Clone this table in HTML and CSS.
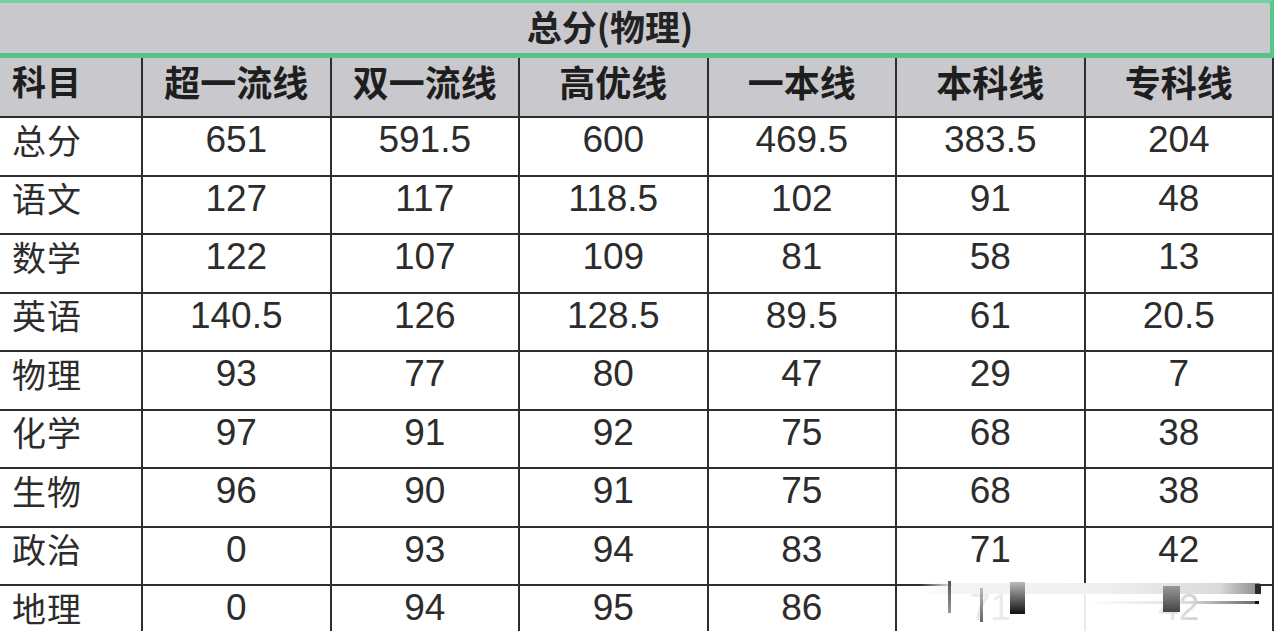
FILE: index.html
```html
<!DOCTYPE html>
<html lang="zh-CN">
<head>
<meta charset="utf-8">
<title>总分(物理)</title>
<link rel="stylesheet" href="styles.css">
</head>
<body>
<div class="sheet">
  <div class="title">总分(物理)</div>

  <div class="cell head subj">科目</div>
  <div class="cell head">超一流线</div>
  <div class="cell head">双一流线</div>
  <div class="cell head">高优线</div>
  <div class="cell head">一本线</div>
  <div class="cell head">本科线</div>
  <div class="cell head">专科线</div>

  <div class="cell subj">总分</div><div class="cell">651</div><div class="cell">591.5</div><div class="cell">600</div><div class="cell">469.5</div><div class="cell">383.5</div><div class="cell">204</div>
  <div class="cell subj">语文</div><div class="cell">127</div><div class="cell">117</div><div class="cell">118.5</div><div class="cell">102</div><div class="cell">91</div><div class="cell">48</div>
  <div class="cell subj">数学</div><div class="cell">122</div><div class="cell">107</div><div class="cell">109</div><div class="cell">81</div><div class="cell">58</div><div class="cell">13</div>
  <div class="cell subj">英语</div><div class="cell">140.5</div><div class="cell">126</div><div class="cell">128.5</div><div class="cell">89.5</div><div class="cell">61</div><div class="cell">20.5</div>
  <div class="cell subj">物理</div><div class="cell">93</div><div class="cell">77</div><div class="cell">80</div><div class="cell">47</div><div class="cell">29</div><div class="cell">7</div>
  <div class="cell subj">化学</div><div class="cell">97</div><div class="cell">91</div><div class="cell">92</div><div class="cell">75</div><div class="cell">68</div><div class="cell">38</div>
  <div class="cell subj">生物</div><div class="cell">96</div><div class="cell">90</div><div class="cell">91</div><div class="cell">75</div><div class="cell">68</div><div class="cell">38</div>
  <div class="cell subj">政治</div><div class="cell">0</div><div class="cell">93</div><div class="cell">94</div><div class="cell">83</div><div class="cell">71</div><div class="cell">42</div>
  <div class="cell subj">地理</div><div class="cell">0</div><div class="cell">94</div><div class="cell">95</div><div class="cell">86</div><div class="cell">71</div><div class="cell">42</div>
</div>

<div class="wm" aria-hidden="true">
  <div class="wm-veil"></div>
  <div class="wm-band"></div>
  <div class="wm-tip"></div>
  <div class="wm-line"></div>
  <div class="wm-dot"></div>
  <div class="wm-bar b1"></div>
  <div class="wm-bar b2"></div>
  <div class="wm-block k1"></div>
  <div class="wm-block k2"></div>
</div>
</body>
</html>
```

FILE: styles.css
```css
html, body {
  margin: 0;
  padding: 0;
}

body {
  width: 1280px;
  height: 631px;
  overflow: hidden;
  background: #ffffff;
  color: #2c2c2c;
  font-family: "Liberation Sans", "Noto Sans CJK SC", sans-serif;
  position: relative;
}

.sheet {
  display: grid;
  grid-template-columns: 143px repeat(6, 188.5px);
  grid-template-rows: 58px 60px repeat(9, 58.5px);
  width: 1274px;
}

.title {
  grid-column: 1 / -1;
  box-sizing: border-box;
  background: #c9c8cc;
  border-top: 3px solid #74d19e;
  border-right: 4px solid #59c68a;
  border-bottom: 5px solid #55c487;
  display: flex;
  align-items: center;
  justify-content: center;
  padding-right: 50px;
  padding-bottom: 6px;
  font-family: "Noto Sans CJK SC", sans-serif;
  font-weight: 700;
  font-size: 35px;
  line-height: 1;
  color: #222222;
}

.cell {
  box-sizing: border-box;
  border-right: 2px solid #2e2e2e;
  border-bottom: 2px solid #2e2e2e;
  display: flex;
  align-items: center;
  justify-content: center;
  padding-bottom: 13px;
  font-size: 37px;
  line-height: 1;
  white-space: nowrap;
}

.head {
  background: #c9c8cc;
  font-family: "Noto Sans CJK SC", sans-serif;
  font-weight: 700;
  font-size: 36px;
  color: #1e1e1e;
  padding-bottom: 12px;
}

.subj {
  justify-content: flex-start;
  padding-left: 12px;
  font-family: "Noto Sans CJK SC", sans-serif;
  font-size: 34px;
  letter-spacing: 1px;
}

.head.subj {
  font-weight: 700;
}

/* blurred watermark smear in the bottom-right corner */
.wm {
  position: absolute;
  left: 915px;
  top: 576px;
  width: 350px;
  height: 55px;
}

.wm-veil {
  position: absolute;
  left: 10px;
  top: 12px;
  width: 340px;
  height: 43px;
  background: linear-gradient(to right, rgba(255,255,255,0.3), rgba(255,255,255,0.9) 8%, rgba(255,255,255,0.9) 70%, rgba(255,255,255,0.55));
}

.wm-band {
  position: absolute;
  left: 5px;
  top: 7px;
  width: 340px;
  height: 11px;
  background: linear-gradient(to right, rgba(235,235,235,0), #f4f4f4 10%, #efefef 55%, #dadada 88%, #8a8a8a);
}

.wm-tip {
  position: absolute;
  left: 340px;
  top: 8px;
  width: 6px;
  height: 10px;
  background: #2a2a2a;
}

.wm-line {
  position: absolute;
  left: 170px;
  top: 25px;
  width: 172px;
  height: 3px;
  background: linear-gradient(to right, rgba(220,220,220,0), #dddddd 60%, #666666);
}

.wm-dot {
  position: absolute;
  left: 340px;
  top: 25px;
  width: 4px;
  height: 3px;
  background: #111;
}

.wm-bar {
  position: absolute;
  width: 3px;
}

.wm-bar.b1 {
  left: 33px;
  top: 5px;
  height: 32px;
  background: linear-gradient(#555, #999);
}

.wm-bar.b2 {
  left: 65px;
  top: 12px;
  height: 34px;
  background: linear-gradient(#bbb, #666);
}

.wm-block {
  position: absolute;
}

.wm-block.k1 {
  left: 95px;
  top: 6px;
  width: 15px;
  height: 32px;
  background: linear-gradient(#bbbbbb, #111111);
}

.wm-block.k2 {
  left: 248px;
  top: 10px;
  width: 17px;
  height: 26px;
  background: linear-gradient(#999, #444);
}
```
